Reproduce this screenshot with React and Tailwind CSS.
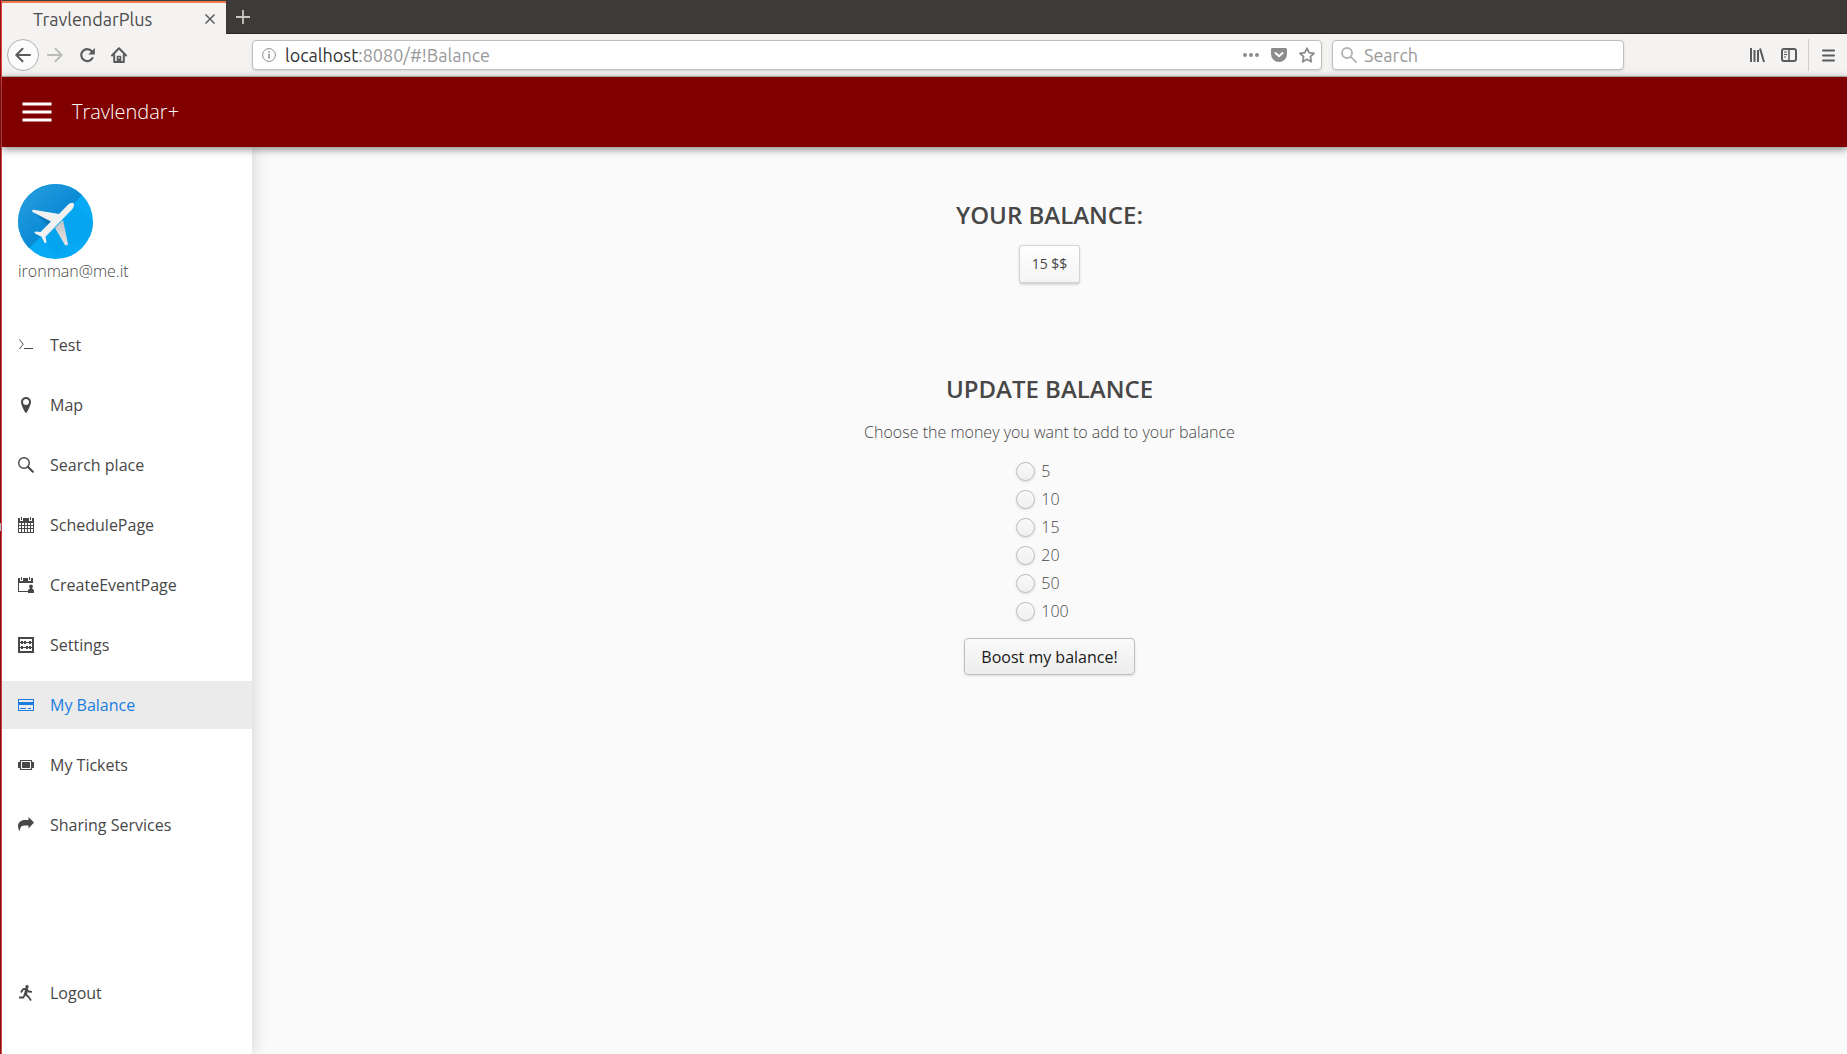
import React from "react";

const Svg = ({ children, size = "size-4", ...rest }) => (
  <svg viewBox="0 0 16 16" className={`${size} shrink-0`} fill="currentColor" aria-hidden="true" {...rest}>
    {children}
  </svg>
);

const TerminalIcon = () => (
  <Svg fill="none" stroke="currentColor">
    <path d="M1.5 2.5C3 4 3.5 5.5 5.2 7.3 3.5 9 3 10.5 1.5 12M6 11.5h9" />
  </Svg>
);
const MarkerIcon = () => (
  <Svg>
    <path
      fillRule="evenodd"
      d="M8 0C5.2 0 3 2.2 3 5s4 11 5 11 5-8.2 5-11-2.2-5-5-5zM8 8C6.3 8 5 6.7 5 5s1.3-3 3-3 3 1.3 3 3-1.3 3-3 3z"
    />
  </Svg>
);
const SearchIcon = () => (
  <Svg fill="none" stroke="currentColor">
    <circle cx="6" cy="6" r="5.3" strokeWidth="1.4" />
    <path d="M9.8 9.8l5 5" strokeWidth="2" strokeLinecap="round" />
  </Svg>
);
const CalendarIcon = () => (
  <Svg shapeRendering="crispEdges">
    <path
      fillRule="evenodd"
      d="M0 1h2v3h3V1h6v3h3V1h2v15H0zM1 6v2h2V6zM4 6v2h2V6zM7 6v2h2V6zM10 6v2h2V6zM13 6v2h2V6zM1 9v2h2V9zM4 9v2h2V9zM7 9v2h2V9zM10 9v2h2V9zM13 9v2h2V9zM1 12v3h2v-3zM4 12v3h2v-3zM7 12v3h2v-3zM10 12v3h2v-3zM13 12v3h2v-3z"
    />
    <path d="M3 0h1v3H3zM12 0h1v3h-1z" />
  </Svg>
);
const CalendarUserIcon = () => (
  <Svg>
    <path d="M0 1h2v3h3V1h5v3h3V1h2v5H0z" />
    <path d="M3 0h1v3H3zM11 0h1v3h-1z" />
    <path d="M0 5h1v9h9v1H0z" />
    <circle cx="13" cy="9.500" r="1.900" />
    <path d="M12 10h2v1.500c1.300.4 2 1.200 2 2.500v2h-6v-2c0-1.300.7-2.100 2-2.500z" />
  </Svg>
);
const AbacusIcon = () => (
  <Svg>
    <path fillRule="evenodd" d="M0 0h16v16H0zM2 2v3h12V2zM2 6v4h12V6zM2 11v3h12v-3z" />
    <path d="M3 4h2v3H3zM6 4h2v3H6zM11 4h2v3h-2zM3 9h2v3H3zM8 9h2v3H8zM11 9h2v3h-2z" />
  </Svg>
);
const CardIcon = () => (
  <Svg shapeRendering="crispEdges">
    <path fillRule="evenodd" d="M0 2h16v12H0zM1 3v2h14V3zM1 8v5h14V8z" />
    <path d="M2 11h6v1H2zM10 11h3v1h-3z" />
  </Svg>
);
const TicketIcon = () => (
  <Svg>
    <path d="M4 5h8v6H4z" />
    <path
      fillRule="evenodd"
      d="M2 3h12v1c0 .6.4 1 1 1h1v6h-1c-.6 0-1 .4-1 1v1H2v-1c0-.6-.4-1-1-1H0V5h1c.6 0 1-.4 1-1zM4 4C3.400 4 3 4.400 3 5v6c0 .6.4 1 1 1h8c.6 0 1-.4 1-1V5c0-.6-.4-1-1-1z"
    />
  </Svg>
);
const ForwardArrowIcon = () => (
  <Svg>
    <path d="M16 5.500L10.500 0v3H7C3 3 0 5.500 0 9c0 2 .8 4 2.200 5.600C1.800 11.500 2.500 8.500 6.500 8.500h4v3z" />
  </Svg>
);
const ExitIcon = () => (
  <Svg>
    <circle cx="9" cy="1.700" r="1.700" />
    <path
      d="M3 7.500l2-3.300 3.500-.4 2 2.700 3.500.3M8.500 4L7.200 9.300l3 2.200 2.800 4M7 8.500L5.500 12.500H1"
      fill="none"
      stroke="currentColor"
      strokeWidth="1.800"
      strokeLinejoin="round"
    />
    <path d="M7 3.500h3L9.200 9.500 6.500 9z" />
  </Svg>
);

const Avatar = () => (
  <svg viewBox="0 0 75 75" className="size-[75px]" role="img" aria-label="Airplane">
    <defs>
      <linearGradient id="shade" x1="0" y1="0" x2="1" y2="1">
        <stop offset="0" stopColor="#2b9fdd" />
        <stop offset="0.5" stopColor="#0a8ad6" />
      </linearGradient>
      <linearGradient id="wing" x1="0" y1="0" x2="0" y2="1">
        <stop offset="0" stopColor="#c4c4c4" />
        <stop offset="1" stopColor="#e4e4e4" />
      </linearGradient>
      <clipPath id="disc">
        <circle cx="37.500" cy="37.500" r="37.500" />
      </clipPath>
    </defs>
    <g clipPath="url(#disc)">
      <path d="M0 0h75v75H0z" fill="#05a9f4" />
      <path d="M0 0h75L12 63.500 0 75z" fill="url(#shade)" />
      <path d="M56 20l19 18v14L50 62 46 36z" fill="#05a5f0" />
      <path d="M15 27l14 14 5-5z" fill="#0877b8" opacity="0.800" />
      <path d="M22 53l18 20 11-10-14-22z" fill="#05a3ec" opacity="0.700" />
    </g>
    <path d="M37 44l8-8 5 24c0 1-2 2-3 1z" fill="url(#wing)" />
    <path
      d="M54.500 18.700c1.600.2 2 2 1 4.300-.6 1.400-1.500 2.600-3 4L27.500 52.800l1 5c0 1-1.300 1.800-2 1l-3-6-6.500-3.300c-.9-.7-.3-1.800 1-2l4.500.5L33 37.500 14.600 28c-1-.8-.3-2.300 1-2.200L41 30l8-8.300c1.500-1.700 3.500-3 5.500-3z"
      fill="#f1f1f1"
    />
  </svg>
);

const navItems = [
  ["Test", TerminalIcon],
  ["Map", MarkerIcon],
  ["Search place", SearchIcon],
  ["SchedulePage", CalendarIcon],
  ["CreateEventPage", CalendarUserIcon],
  ["Settings", AbacusIcon],
  ["My Balance", CardIcon],
  ["My Tickets", TicketIcon],
  ["Sharing Services", ForwardArrowIcon],
];

const NavLink = ({ label, Icon, active }) => (
  <a
    href={`#!${label}`}
    aria-current={active ? "page" : undefined}
    className={`flex h-12 items-center gap-4 pl-4 text-base ${
      active ? "bg-[#ebebeb] text-[#197de1]" : "text-[#474747]"
    }`}
  >
    <Icon />
    <span>{label}</span>
  </a>
);

const Browser = () => (
  <div className="font-['Ubuntu','Noto_Sans',sans-serif]">
    <div className="flex h-[34px] border-b border-[#2c2428] bg-[#3c3b37]">
      <div className="mt-px -mb-px flex w-56 items-center border-t-2 border-[#f0794e] bg-[#f4f3f2] pr-[11px] pl-[31px]">
        <span className="flex-1 text-lg text-[#4c4c4c]">TravlendarPlus</span>
        <button aria-label="Close tab" className="text-[#5c5c5c]">
          <svg viewBox="0 0 10 10" className="size-[10px]" stroke="currentColor" strokeWidth="1.500">
            <path d="M0.500 0.500l9 9M9.500 0.500l-9 9" />
          </svg>
        </button>
      </div>
      <button aria-label="New tab" className="ml-[10px] text-[#c9c6c0]">
        <svg viewBox="0 0 14 14" className="size-[14px]" stroke="currentColor" strokeWidth="1.800">
          <path d="M7 0v14M0 7h14" />
        </svg>
      </button>
    </div>
    <div className="flex h-[43px] items-center border-b border-[#b9b8b7] bg-[#f4f3f2] pr-3 pl-[5px] text-[#5b5b5b]">
      <button
        aria-label="Back"
        className="flex size-8 items-center justify-center rounded-full border border-[#b1b1b1] bg-[#fcfcfc]"
      >
        <Svg fill="none" stroke="currentColor" strokeWidth="2" strokeLinecap="round" strokeLinejoin="round">
          <path d="M15 8H1.500M7.500 1.800L1.300 8l6.200 6.200" />
        </Svg>
      </button>
      <button aria-label="Forward" className="ml-2 text-[#bcbcbb]">
        <Svg fill="none" stroke="currentColor" strokeWidth="2" strokeLinecap="round" strokeLinejoin="round">
          <path d="M1 8h13.500M8.500 1.800L14.700 8l-6.200 6.200" />
        </Svg>
      </button>
      <button aria-label="Reload" className="ml-4">
        <Svg fill="none" stroke="currentColor" strokeWidth="2.100">
          <path d="M12.800 4.200A6 6 0 1 0 13.500 11" strokeLinecap="round" />
          <path d="M15.800 1v6.500H9.300z" fill="currentColor" stroke="none" />
        </Svg>
      </button>
      <button aria-label="Home" className="ml-4">
        <Svg fill="none" stroke="currentColor" strokeWidth="2" strokeLinejoin="round" strokeLinecap="round">
          <path d="M1 8.500L8 1.200l7 7.300" />
          <path d="M3.200 8v7h9.600V8" />
          <path d="M6.500 15V9.500h3V15zM8 12v3" strokeWidth="1.500" />
        </Svg>
      </button>
      <div className="ml-[125px] flex h-[30px] flex-1 items-center rounded border border-[#bfbfbe] bg-white pr-[6px] pl-[9px] text-[#8c8c8c] shadow-sm">
        <svg viewBox="0 0 14 14" className="size-[14px] shrink-0" fill="none" stroke="currentColor" aria-hidden="true">
          <circle cx="7" cy="7" r="6.400" />
          <path d="M7 6v4.500M7 3.200v1.600" strokeWidth="1.600" />
        </svg>
        <div role="textbox" aria-label="Address" tabIndex={0} className="ml-[9px] flex-1 text-lg text-[#999]">
          <span className="text-[#333]">localhost</span>:8080/#!Balance
        </div>
        <button aria-label="Page actions">
          <Svg>
            <circle cx="2" cy="8" r="2" />
            <circle cx="8" cy="8" r="2" />
            <circle cx="14" cy="8" r="2" />
          </Svg>
        </button>
        <button aria-label="Save to Pocket" className="ml-3">
          <Svg>
            <path d="M1.500 1h13C15.400 1 16 1.600 16 2.500V7a8 8 0 0 1-16 0V2.500C0 1.600.6 1 1.500 1z" />
            <path d="M4.500 6L8 9.300 11.500 6" fill="none" stroke="white" strokeWidth="2" strokeLinecap="round" strokeLinejoin="round" />
          </Svg>
        </button>
        <button aria-label="Bookmark this page" className="ml-3">
          <Svg fill="none" stroke="currentColor" strokeWidth="1.800" strokeLinejoin="round">
            <path d="M8 1.200l2.100 4.500 4.900.6-3.600 3.400.9 5.100L8 12.300l-4.300 2.500.9-5.100L1 6.300l4.900-.6z" />
          </Svg>
        </button>
      </div>
      <label className="ml-[10px] flex h-[30px] w-[292px] items-center rounded border border-[#bfbfbe] bg-white pl-2 text-[#b3b3b3] shadow-sm">
        <Svg fill="none" stroke="currentColor" strokeWidth="1.900">
          <circle cx="6" cy="6" r="5" />
          <path d="M9.600 9.600l6 6" />
        </Svg>
        <input
          type="text"
          aria-label="Search"
          placeholder="Search"
          className="ml-[7px] min-w-0 flex-1 bg-transparent text-lg outline-none placeholder:text-[#999]"
        />
      </label>
      <button aria-label="Library" className="ml-[125px]">
        <Svg fill="none" stroke="currentColor" strokeWidth="2">
          <path d="M2 1v14M5.500 3v12M9 3v12M11 1.500l4 13.500" />
        </Svg>
      </button>
      <button aria-label="Sidebars" className="ml-4">
        <Svg fill="none" stroke="currentColor">
          <rect x="1" y="2" width="14" height="12" rx="2" strokeWidth="2" />
          <path d="M8 2v12" strokeWidth="1.500" />
          <path d="M3 5h3M3 7.500h3M3 10h2" />
        </Svg>
      </button>
      <span className="ml-[11px] h-8 w-px bg-[#cfcfce]" />
      <button aria-label="Open menu" className="ml-[13px]">
        <svg viewBox="0 0 13 13" className="size-[13px]" stroke="currentColor" strokeWidth="2" strokeLinecap="round">
          <path d="M1 1.500h11M1 6.500h11M1 11.500h11" />
        </svg>
      </button>
    </div>
  </div>
);

export default function App() {
  return (
    <div className="flex min-h-screen bg-[#fafafa] font-['Open_Sans',sans-serif]">
      <div className="flex w-[2px] shrink-0 items-center border-r border-[#e04848] bg-[#8f1216]">
        <span className="h-2 w-px bg-[#c8c8c8]" />
      </div>
      <div className="flex min-w-0 flex-1 flex-col">
        <Browser />
        <header className="z-10 flex h-[70px] items-center bg-[#800000] pl-5 text-white shadow-[0_2px_8px_rgba(0,0,0,0.5)]">
          <button aria-label="Toggle menu">
            <svg viewBox="0 0 30 20" className="h-5 w-[30px]" fill="currentColor">
              <path d="M0.500 0.500h29v3h-29zM0.500 8.500h29v3h-29zM0.500 16.500h29v3h-29z" />
            </svg>
          </button>
          <span className="ml-5 text-xl font-light">Travlendar+</span>
        </header>
        <div className="flex flex-1">
          <aside className="flex w-[250px] shrink-0 flex-col bg-white pt-[37px] pb-[37px] shadow-[0_0_16px_rgba(0,0,0,0.18)]">
            <div className="px-4">
              <Avatar />
              <p className="text-base font-light text-[#474747]">ironman@me.it</p>
            </div>
            <nav className="mt-[38px] flex flex-1 flex-col gap-3">
              {navItems.map(([label, Icon]) => (
                <NavLink key={label} label={label} Icon={Icon} active={label === "My Balance"} />
              ))}
              <div className="mt-auto">
                <NavLink label="Logout" Icon={ExitIcon} />
              </div>
            </nav>
          </aside>
          <main className="flex flex-1 flex-col items-center pt-[52px] text-[#474747]">
            <h2 className="text-2xl font-semibold">YOUR BALANCE:</h2>
            <div className="mt-[14px] rounded-[3px] border border-b-2 border-[#d3d3d3] bg-linear-to-b from-white to-[#f4f4f4] px-3 py-2 text-sm shadow-sm">
              15 $$
            </div>
            <h2 className="mt-[89px] text-2xl font-semibold">UPDATE BALANCE</h2>
            <p className="mt-[15px] font-light">Choose the money you want to add to your balance</p>
            <div role="radiogroup" aria-label="Amount" className="mt-[15px] flex flex-col gap-1 pr-[14px]">
              {["5", "10", "15", "20", "50", "100"].map((amount) => (
                <label key={amount} className="flex items-center gap-[6px] font-light">
                  <input
                    type="radio"
                    name="amount"
                    value={amount}
                    className="size-[19px] appearance-none rounded-full border border-[#bdbdbd] bg-linear-to-b from-[#fafafa] to-[#efefef] shadow-sm"
                  />
                  {amount}
                </label>
              ))}
            </div>
            <button className="mt-[15px] h-[37px] rounded border border-[#bfbfbf] bg-linear-to-b from-[#fafafa] to-[#ededed] px-4 text-base text-[#191919] shadow-sm">
              Boost my balance!
            </button>
          </main>
        </div>
      </div>
    </div>
  );
}
